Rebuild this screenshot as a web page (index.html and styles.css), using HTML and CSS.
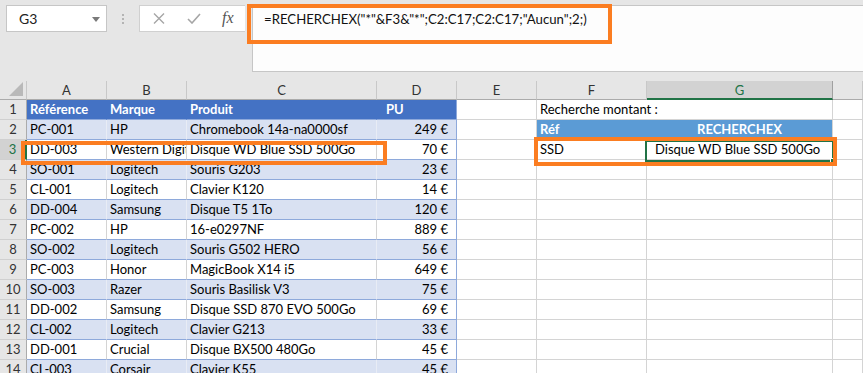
FILE: index.html
```html
<!DOCTYPE html>
<html lang="fr">
<head>
<meta charset="utf-8">
<title>RECHERCHEX</title>
<link rel="stylesheet" href="styles.css">
</head>
<body>
<div class="app">
  <div class="fbar">
    <div class="namebox"><span>G3</span>
      <svg class="dd" width="8" height="5" viewBox="0 0 8 5"><path d="M0 0H8L4 5Z" fill="#7a7a7a"/></svg>
    </div>
    <div class="grip"><i></i><i></i><i></i></div>
    <div class="fbtns">
      <svg width="12" height="11" viewBox="0 0 12 11"><path d="M1 0.5L11 10.5M11 0.5L1 10.5" stroke="#a6a6a6" stroke-width="1.4" fill="none"/></svg>
      <svg width="14" height="11" viewBox="0 0 14 11"><path d="M1 6L5 10L13 1" stroke="#a6a6a6" stroke-width="1.6" fill="none"/></svg>
      <span class="fx">fx</span>
    </div>
    <div class="finput">=RECHERCHEX("*"&amp;F3&amp;"*";C2:C17;C2:C17;"Aucun";2;)</div>
  </div>

  <div class="sheet">
    <div class="corner"><svg width="14" height="14" viewBox="0 0 14 14"><path d="M14 0V14H0Z" fill="#b9b9b9"/></svg></div>
    <div class="h">A</div><div class="h">B</div><div class="h">C</div><div class="h">D</div><div class="h">E</div><div class="h">F</div><div class="h sel">G</div><div class="h"></div>

    <div class="r">1</div>
    <div class="c th">Référence</div><div class="c th">Marque</div><div class="c th">Produit</div><div class="c th pu">PU</div>
    <div class="c"></div><div class="c span2">Recherche montant :</div><div class="c"></div>

    <div class="r">2</div>
    <div class="c b">PC-001</div><div class="c b">HP</div><div class="c b">Chromebook 14a-na0000sf</div><div class="c b n">249 €</div>
    <div class="c"></div><div class="c th2">Réf</div><div class="c th2 ctr">RECHERCHEX</div><div class="c"></div>

    <div class="r rsel">3</div>
    <div class="c w">DD-003</div><div class="c w">Western Digital</div><div class="c w">Disque WD Blue SSD 500Go</div><div class="c w n">70 €</div>
    <div class="c"></div><div class="c">SSD</div><div class="c res">Disque WD Blue SSD 500Go</div><div class="c"></div>

    <div class="r">4</div>
    <div class="c b">SO-001</div><div class="c b">Logitech</div><div class="c b">Souris G203</div><div class="c b n">23 €</div>
    <div class="c"></div><div class="c"></div><div class="c"></div><div class="c"></div>

    <div class="r">5</div>
    <div class="c w">CL-001</div><div class="c w">Logitech</div><div class="c w">Clavier K120</div><div class="c w n">14 €</div>
    <div class="c"></div><div class="c"></div><div class="c"></div><div class="c"></div>

    <div class="r">6</div>
    <div class="c b">DD-004</div><div class="c b">Samsung</div><div class="c b">Disque T5 1To</div><div class="c b n">120 €</div>
    <div class="c"></div><div class="c"></div><div class="c"></div><div class="c"></div>

    <div class="r">7</div>
    <div class="c w">PC-002</div><div class="c w">HP</div><div class="c w">16-e0297NF</div><div class="c w n">889 €</div>
    <div class="c"></div><div class="c"></div><div class="c"></div><div class="c"></div>

    <div class="r">8</div>
    <div class="c b">SO-002</div><div class="c b">Logitech</div><div class="c b">Souris G502 HERO</div><div class="c b n">56 €</div>
    <div class="c"></div><div class="c"></div><div class="c"></div><div class="c"></div>

    <div class="r">9</div>
    <div class="c w">PC-003</div><div class="c w">Honor</div><div class="c w">MagicBook X14 i5</div><div class="c w n">649 €</div>
    <div class="c"></div><div class="c"></div><div class="c"></div><div class="c"></div>

    <div class="r">10</div>
    <div class="c b">SO-003</div><div class="c b">Razer</div><div class="c b">Souris Basilisk V3</div><div class="c b n">75 €</div>
    <div class="c"></div><div class="c"></div><div class="c"></div><div class="c"></div>

    <div class="r">11</div>
    <div class="c w">DD-002</div><div class="c w">Samsung</div><div class="c w">Disque SSD 870 EVO 500Go</div><div class="c w n">69 €</div>
    <div class="c"></div><div class="c"></div><div class="c"></div><div class="c"></div>

    <div class="r">12</div>
    <div class="c b">CL-002</div><div class="c b">Logitech</div><div class="c b">Clavier G213</div><div class="c b n">33 €</div>
    <div class="c"></div><div class="c"></div><div class="c"></div><div class="c"></div>

    <div class="r">13</div>
    <div class="c w">DD-001</div><div class="c w">Crucial</div><div class="c w">Disque BX500 480Go</div><div class="c w n">45 €</div>
    <div class="c"></div><div class="c"></div><div class="c"></div><div class="c"></div>

    <div class="r">14</div>
    <div class="c b">CL-003</div><div class="c b">Corsair</div><div class="c b">Clavier K55</div><div class="c b n">45 €</div>
    <div class="c"></div><div class="c"></div><div class="c"></div><div class="c"></div>
  </div>

  <div class="selbox"><span class="handle"></span></div>
  <div class="mark mark-formula"></div>
  <div class="mark mark-row"></div>
  <div class="mark mark-result"></div>
</div>
</body>
</html>
```

FILE: styles.css
```css
* { box-sizing: border-box; }
body {
  margin: 0;
  width: 863px;
  height: 373px;
  overflow: hidden;
  background: #fff;
  font-family: Lato, "Liberation Sans", sans-serif;
  color: #000;
}
.app {
  position: relative;
  width: 863px;
  height: 373px;
  overflow: hidden;
}

/* formula bar */
.fbar {
  height: 82px;
  background: #e6e6e6;
  display: flex;
  align-items: flex-start;
  padding-top: 5px;
  border-bottom: 1px solid #d6d6d6;
}
.namebox {
  margin-left: 6px;
  width: 101px;
  height: 27px;
  background: #fff;
  border: 1px solid #c6c6c6;
  display: flex;
  align-items: center;
  justify-content: space-between;
  padding: 0 6px 0 12px;
  font-size: 14px;
  color: #222;
}
.namebox .dd { margin-top: 1px; }
.grip {
  width: 32px;
  height: 27px;
  display: flex;
  flex-direction: column;
  align-items: center;
  justify-content: center;
  gap: 2px;
}
.grip i {
  display: block;
  width: 2px;
  height: 2px;
  background: #b4b4b4;
}
.fbtns {
  width: 106px;
  height: 27px;
  background: #fff;
  border: 1px solid #d0d0d0;
  border-right: none;
  display: flex;
  align-items: center;
  padding-left: 13px;
  gap: 22px;
}
.fx {
  font-family: "Liberation Serif", serif;
  font-style: italic;
  font-size: 16px;
  color: #555;
  margin-left: -1px;
  margin-top: -2px;
}
.finput {
  margin-left: 7px;
  flex: 1;
  height: 67px;
  background: #fdfdfd;
  border: 1px solid #c6c6c6;
  border-right: none;
  padding: 3px 0 0 11px;
  font-size: 13.2px;
  line-height: 20px;
  color: #111;
  white-space: nowrap;
}

/* sheet grid */
.sheet {
  display: grid;
  grid-template-columns: 27px 80px 80px 190px 80px 80px 110px 186px 30px;
  grid-template-rows: 19px;
  grid-auto-rows: 20px;
  margin-top: -1px;
}
.corner {
  background: #e6e6e6;
  border-right: 1px solid #c8c8c8;
  border-bottom: 1px solid #ababab;
  display: flex;
  align-items: flex-end;
  justify-content: flex-end;
  padding: 0 3px 3px 0;
}
.h {
  background: #e6e6e6;
  border-right: 1px solid #c8c8c8;
  border-bottom: 1px solid #ababab;
  text-align: center;
  font-size: 13px;
  line-height: 19px;
  color: #333;
}
.h.sel {
  background: #d2d2d2;
  color: #217346;
  border-bottom: 2px solid #217346;
  border-right-color: #a0a0a0;
}
.r {
  background: #e6e6e6;
  border-right: 1px solid #ababab;
  border-bottom: 1px solid #d0d0d0;
  text-align: center;
  font-size: 13px;
  line-height: 19px;
  color: #333;
}
.r.rsel {
  background: #d2d2d2;
  color: #217346;
  border-right: 2px solid #217346;
}
.c {
  border-right: 1px solid #d4d4d4;
  border-bottom: 1px solid #d4d4d4;
  padding: 0 3px;
  font-size: 13px;
  line-height: 19px;
  white-space: nowrap;
  overflow: hidden;
}
.th {
  background: #4472c4;
  color: #fff;
  font-weight: bold;
  border-right-color: #4472c4;
  border-bottom-color: #8ea9db;
}
.th.pu { padding-left: 9px; border-right-color: #8ea9db; }
.b {
  background: #d9e1f2;
  border-right-color: #e8ecf5;
  border-bottom-color: #8ea9db;
}
.w {
  background: #fff;
  border-right-color: #d4d4d4;
  border-bottom-color: #8ea9db;
}
.n { text-align: right; padding-right: 8px; border-right-color: #8ea9db; }
.span2 { grid-column: span 2; overflow: visible; }
.th2 {
  background: #5b9bd5;
  color: #fff;
  font-weight: bold;
  border-right-color: #5b9bd5;
  border-bottom-color: #d4d4d4;
}
.th2.ctr { text-align: center; border-right-color: #d4d4d4; }
.res { padding-left: 8px; }

/* overlays */
.selbox {
  position: absolute;
  left: 645px;
  top: 140px;
  width: 189px;
  height: 22px;
  border: 2px solid #217346;
}
.handle {
  position: absolute;
  right: -4px;
  bottom: -4px;
  width: 6px;
  height: 6px;
  background: #217346;
  border: 1px solid #fff;
}
.mark {
  position: absolute;
  border: 4px solid #fb7d21;
}
.mark-formula { left: 247px; top: 4px; width: 365px; height: 40px; }
.mark-row { left: 21px; top: 141px; width: 366px; height: 24px; }
.mark-result { left: 534px; top: 137px; width: 303px; height: 29px; }
```
